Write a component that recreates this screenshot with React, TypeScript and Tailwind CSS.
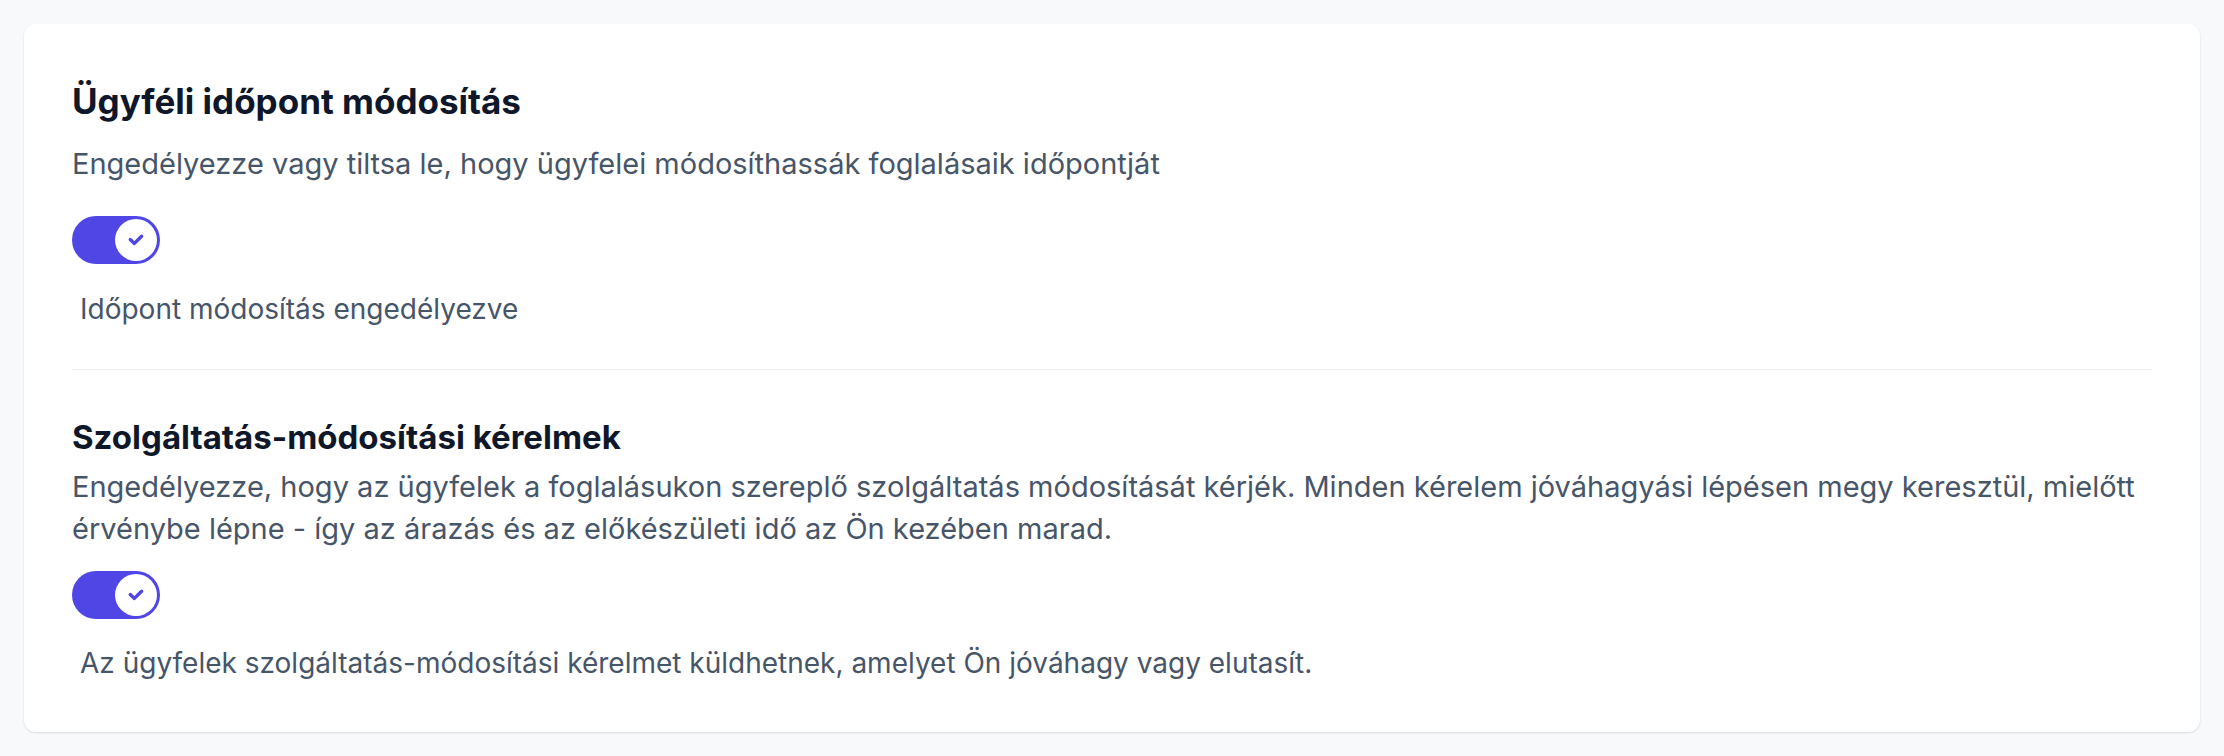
import React from "react";

function Toggle() {
  return (
    <div className="relative h-12 w-[88px] shrink-0 rounded-full bg-[#4f46e5]">
      <div className="absolute right-[3px] top-[3px] flex h-[42px] w-[42px] items-center justify-center rounded-full bg-white">
        <svg width="20" height="20" viewBox="0 0 20 20" fill="none">
          <path d="M4.3 9.6 L8.4 13.4 L15.6 6.2" stroke="#4f46e5" strokeWidth="3.4" strokeLinecap="round" strokeLinejoin="round" />
        </svg>
      </div>
    </div>
  );
}

export default function App() {
  return (
    <div className="min-h-[756px] bg-[#f8f9fb] p-6 font-['Inter',sans-serif]">
      <div className="flex flex-col rounded-xl bg-white px-12 pt-12 pb-[51px] shadow-[0_1px_3px_rgba(0,0,0,0.08),0_1px_2px_rgba(0,0,0,0.05)]">
        <div className="mt-[11px] text-[35px] leading-[36px] font-bold text-[#0f172a]">Ügyféli időpont módosítás</div>
        <div className="mt-[24px] text-[29px] leading-[42px] text-[#475569]">
          Engedélyezze vagy tiltsa le, hogy ügyfelei módosíthassák foglalásaik időpontját
        </div>
        <div className="mt-[31px] flex">
          <Toggle />
        </div>
        <div className="mt-[27px] ml-2 text-[28px] leading-[36px] text-[#475569]">Időpont módosítás engedélyezve</div>
        <div className="mt-[42px] h-px bg-[#eef1f5]" />
        <div className="mt-[49px] text-[33px] leading-[36px] font-bold text-[#0f172a]">Szolgáltatás-módosítási kérelmek</div>
        <div className="mt-[11px] text-[29px] leading-[42px] text-[#475569]">
          Engedélyezze, hogy az ügyfelek a foglalásukon szereplő szolgáltatás módosítását kérjék. Minden kérelem jóváhagyási lépésen megy keresztül, mielőtt érvénybe lépne - így az árazás és az előkészületi idő az Ön kezében marad.
        </div>
        <div className="mt-[21px] flex">
          <Toggle />
        </div>
        <div className="mt-[26px] ml-2 text-[28px] leading-[36px] text-[#475569]">
          Az ügyfelek szolgáltatás-módosítási kérelmet küldhetnek, amelyet Ön jóváhagy vagy elutasít.
        </div>
      </div>
    </div>
  );
}
